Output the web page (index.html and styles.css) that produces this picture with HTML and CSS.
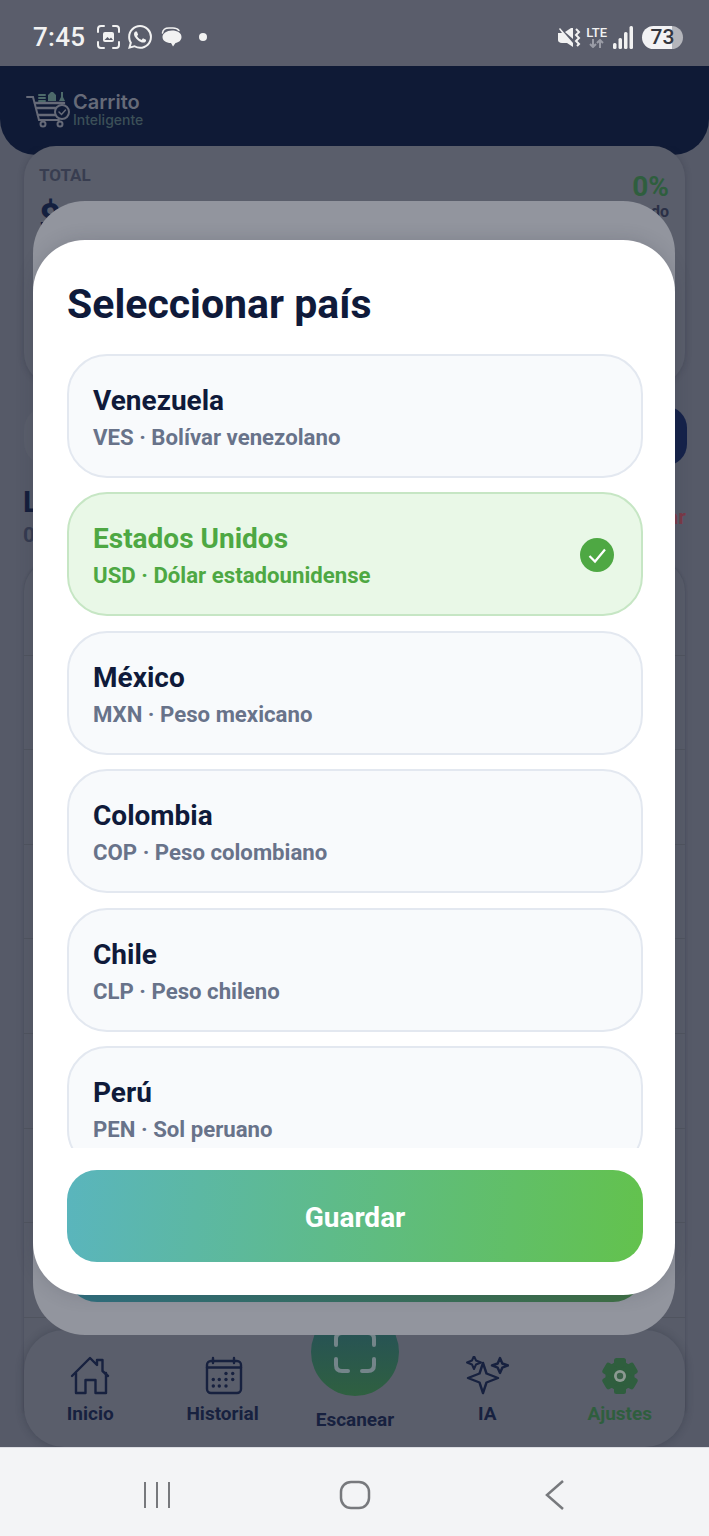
FILE: index.html
```html
<!DOCTYPE html>
<html lang="es">
<head>
    <meta charset="UTF-8">
    <meta name="viewport" content="width=device-width, initial-scale=1.0">
    <title>Carrito Inteligente</title>
    <link rel="stylesheet" href="styles.css">
</head>
<body>
    <div class="phone">
        <!-- status bar -->
        <div class="status-bar">
            <span class="clock">7:45</span>
            <svg class="st-shot" width="23" height="24" viewBox="0 0 23 24" fill="none" stroke="#f2f2f2" stroke-width="2" stroke-linecap="round">
                <path d="M1 7V4q0-3 3-3h3M16 1h3q3 0 3 3v3M22 17v3q0 3-3 3h-3M7 23H4q-3 0-3-3v-3"/>
                <rect x="6" y="7" width="11" height="10" rx="2" fill="#f2f2f2" stroke="none"/>
                <path d="M7.5 15l3-3 2 2 1.500-1.500 2 2.500z" fill="#5a5d6b" stroke="none"/>
            </svg>
            <svg class="st-wa" width="24" height="24" viewBox="0 0 24 24" fill="#f2f2f2">
                <path d="M17.472 14.382c-.297-.149-1.758-.867-2.03-.967-.273-.099-.471-.148-.67.15-.197.297-.767.966-.94 1.164-.173.199-.347.223-.644.075-.297-.15-1.255-.463-2.39-1.475-.883-.788-1.48-1.761-1.653-2.059-.173-.297-.018-.458.13-.606.134-.133.298-.347.446-.52.149-.174.198-.298.298-.497.099-.198.05-.371-.025-.52-.075-.149-.669-1.612-.916-2.207-.242-.579-.487-.5-.669-.51-.173-.008-.371-.01-.57-.01-.198 0-.52.074-.792.372-.272.297-1.04 1.016-1.04 2.479 0 1.462 1.065 2.875 1.213 3.074.149.198 2.096 3.2 5.077 4.487.709.306 1.262.489 1.694.625.712.227 1.36.195 1.871.118.571-.085 1.758-.719 2.006-1.413.248-.694.248-1.289.173-1.413-.074-.124-.272-.198-.57-.347m-5.421 7.403h-.004a9.87 9.87 0 01-5.031-1.378l-.361-.214-3.741.982.998-3.648-.235-.374a9.86 9.86 0 01-1.51-5.26c.001-5.45 4.436-9.884 9.888-9.884 2.64 0 5.122 1.03 6.988 2.898a9.825 9.825 0 012.893 6.994c-.003 5.45-4.437 9.884-9.885 9.884m8.413-18.297A11.815 11.815 0 0012.05 0C5.495 0 .16 5.335.157 11.892c0 2.096.547 4.142 1.588 5.945L.057 24l6.305-1.654a11.882 11.882 0 005.683 1.448h.005c6.554 0 11.89-5.335 11.893-11.893a11.821 11.821 0 00-3.48-8.413z"/>
            </svg>
            <svg class="st-chat" width="21" height="20" viewBox="0 0 21 20" fill="#f2f2f2">
                <path d="M1.500 6Q2 1 8 1h4q4 0 6 2.500" fill="none" stroke="#f2f2f2" stroke-width="1.500" stroke-linecap="round"/>
                <path d="M11 3.500c5.500 0 9.500 2.500 9.500 6.500 0 3.500-3 5.500-6 6l-2.500 3.500-2-3.500c-5 0-8.500-2.500-8.500-6s4-6.500 9.500-6.500z"/>
            </svg>
            <span class="st-dot"></span>
            <div class="status-right">
                <svg width="24" height="21" viewBox="0 0 24 21" fill="#f2f2f2">
                    <path d="M1 6h4L2 2l1-1 13 15v4l-6-4H5q-4-.5-4-3z"/>
                    <path d="M8 5l6-4h2v11z"/>
                    <path d="M19 2l3 3-3 3 3 3-3 3 3 3-2 2" fill="none" stroke="#f2f2f2" stroke-width="2"/>
                </svg>
                <div class="lte">
                    <span>LTE</span>
                    <svg width="15" height="9" viewBox="0 0 15 9" fill="none" stroke="#9a9ca6" stroke-width="2">
                        <path d="M4 0v8M1 5l3 3 3-3M11 9V1M8 4l3-3 3 3"/>
                    </svg>
                </div>
                <svg class="signal" width="21" height="23" viewBox="0 0 21 23" fill="#f2f2f2">
                    <rect x="0" y="17" width="3.500" height="6" rx="1.500"/>
                    <rect x="5.500" y="12" width="3.500" height="11" rx="1.500"/>
                    <rect x="11" y="6" width="3.500" height="17" rx="1.500"/>
                    <rect x="16.500" y="0" width="3.500" height="23" rx="1.500"/>
                </svg>
                <div class="battery"><span>73</span></div>
            </div>
        </div>

        <!-- app behind the dialog -->
        <div class="app">
            <header class="app-header">
                <svg width="44" height="40" viewBox="0 0 44 40" fill="none" stroke="#666a78" stroke-width="2" stroke-linecap="round">
                    <path d="M1 9h6l6 23h20"/>
                    <path d="M9 15h29M11 20h19M12 27h18" stroke-width="2.500"/>
                    <circle cx="17" cy="36" r="2.500"/>
                    <circle cx="34" cy="36" r="2.500"/>
                    <circle cx="36" cy="24" r="7" fill="#0f1a36"/>
                    <path d="M33 24l2.500 2.500 4-4.500" stroke-width="1.500"/>
                    <path d="M13 7h6M13 10h6M13 13h6" stroke="#4d6a6a"/>
                    <path d="M22 13V7l3-3h2l3 3v6zM33 13l2-4V4l2 0v5l2 4z" fill="#4d6a6a" stroke="none"/>
                </svg>
                <div class="brand">
                    <span class="brand-main">Carrito</span>
                    <span class="brand-sub">Inteligente</span>
                </div>
            </header>

            <div class="content">
                <section class="total-card">
                    <div>
                        <div class="total-label">TOTAL</div>
                        <div class="total-value">$ 0.00</div>
                    </div>
                    <div class="total-side">
                        <div class="percent">0%</div>
                        <div class="percent-label">Ahorrado</div>
                    </div>
                </section>
                <div class="search-row">
                    <span class="search-btn"></span>
                </div>
                <div class="list-head">
                    <div>
                        <div class="list-title">Lista</div>
                        <div class="list-count">0 items</div>
                    </div>
                    <span class="list-clear">Vaciar</span>
                </div>
                <div class="list-card">
                    <div class="list-row"></div>
                    <div class="list-row"></div>
                    <div class="list-row"></div>
                    <div class="list-row"></div>
                    <div class="list-row"></div>
                    <div class="list-row"></div>
                    <div class="list-row"></div>
                    <div class="list-row"></div>
                    <div class="list-row"></div>
                </div>
            </div>

            <nav class="tabs">
                <div class="tab">
                    <svg width="40" height="40" viewBox="0 0 40 40" fill="none" stroke="#17213f" stroke-width="2.400" stroke-linejoin="round" stroke-linecap="round">
                        <path d="M2 20L20 2l7 7V4h5.500v11L38 20"/>
                        <path d="M6 17v20h9.500V24h10v13H36V17"/>
                    </svg>
                    <span>Inicio</span>
                </div>
                <div class="tab">
                    <svg width="40" height="40" viewBox="0 0 40 40" fill="none" stroke="#17213f" stroke-width="2.400" stroke-linecap="round">
                        <rect x="4" y="5" width="34" height="32" rx="4"/>
                        <path d="M4 11.500h34M10 2v5M31 2v5"/>
                        <g fill="#17213f" stroke="none">
                            <circle cx="23" cy="17.500" r="1.700"/><circle cx="29.700" cy="17.500" r="1.700"/>
                            <circle cx="10.300" cy="23.500" r="1.700"/><circle cx="16.300" cy="23.500" r="1.700"/>
                            <circle cx="23" cy="23.500" r="1.700"/><circle cx="29.700" cy="23.500" r="1.700"/>
                            <circle cx="10.300" cy="30" r="1.700"/><circle cx="16.300" cy="30" r="1.700"/>
                            <circle cx="23" cy="30" r="1.700"/>
                        </g>
                    </svg>
                    <span>Historial</span>
                </div>
                <div class="tab tab-scan">
                    <div class="scan-circle">
                        <svg width="42" height="42" viewBox="0 0 42 42" fill="none" stroke="#74858a" stroke-width="4" stroke-linecap="round">
                            <path d="M2 14V8q0-6 6-6h6M28 2h6q6 0 6 6v6M40 28v6q0 6-6 6h-6M14 40H8q-6 0-6-6v-6"/>
                        </svg>
                    </div>
                    <span>Escanear</span>
                </div>
                <div class="tab">
                    <svg width="44" height="40" viewBox="0 0 44 40" fill="none" stroke="#17213f" stroke-width="2.400" stroke-linejoin="round">
                        <path d="M18 7l3.500 10.500L33 22l-11.500 4.500L18 37l-3.500-10.500L3 22l11.500-4.500z"/>
                        <path d="M9 0l2 4.500 5 2-5 2L9 13l-2-4.500-5-2 5-2z" stroke-width="2"/>
                        <path d="M35 2l2.300 5.500L43 9.500l-5.700 2.200L35 17l-2.300-5.300L27 9.500l5.700-2z"/>
                    </svg>
                    <span>IA</span>
                </div>
                <div class="tab tab-active">
                    <svg width="40" height="40" viewBox="0 0 40 40" fill="#2f5e3e">
                        <circle cx="20" cy="20" r="14.500"/>
                        <rect x="14" y="2" width="12" height="36" rx="2.500"/>
                        <rect x="14" y="2" width="12" height="36" rx="2.500" transform="rotate(60 20 20)"/>
                        <rect x="14" y="2" width="12" height="36" rx="2.500" transform="rotate(120 20 20)"/>
                        <circle cx="20" cy="20" r="6" fill="#8c9a92"/>
                        <circle cx="20" cy="20" r="3.200" fill="#3b6149"/>
                    </svg>
                    <span>Ajustes</span>
                </div>
            </nav>
        </div>

        <!-- android navigation bar -->
        <div class="nav-bar">
            <svg width="28" height="26" viewBox="0 0 28 26" fill="none" stroke="#77797d" stroke-width="2"><path d="M2 0v26M14 0v26M26 0v26"/></svg>
            <svg width="32" height="30" viewBox="0 0 32 30" fill="none" stroke="#77797d" stroke-width="2.500"><rect x="2" y="2" width="28" height="26" rx="10"/></svg>
            <svg width="20" height="30" viewBox="0 0 20 30" fill="none" stroke="#77797d" stroke-width="2.500"><path d="M18 1L2 15l16 14"/></svg>
        </div>

        <!-- dialog stack -->
        <div class="sheet sheet-back">
            <div class="sheet-fill"></div>
            <div class="save-btn save-btn-dim"></div>
        </div>
        <div class="sheet sheet-front">
            <h2 class="sheet-title">Seleccionar país</h2>
            <div class="country-list">
                <div class="country">
                    <div>
                        <div class="country-name">Venezuela</div>
                        <div class="country-sub">VES · Bolívar venezolano</div>
                    </div>
                </div>
                <div class="country selected">
                    <div>
                        <div class="country-name">Estados Unidos</div>
                        <div class="country-sub">USD · Dólar estadounidense</div>
                    </div>
                    <svg width="34" height="34" viewBox="0 0 34 34">
                        <circle cx="17" cy="17" r="17" fill="#4ea843"/>
                        <path d="M9.500 18l5.500 5.500L25 11.500" fill="none" stroke="#fff" stroke-width="2.200"/>
                    </svg>
                </div>
                <div class="country">
                    <div>
                        <div class="country-name">México</div>
                        <div class="country-sub">MXN · Peso mexicano</div>
                    </div>
                </div>
                <div class="country">
                    <div>
                        <div class="country-name">Colombia</div>
                        <div class="country-sub">COP · Peso colombiano</div>
                    </div>
                </div>
                <div class="country">
                    <div>
                        <div class="country-name">Chile</div>
                        <div class="country-sub">CLP · Peso chileno</div>
                    </div>
                </div>
                <div class="country">
                    <div>
                        <div class="country-name">Perú</div>
                        <div class="country-sub">PEN · Sol peruano</div>
                    </div>
                </div>
            </div>
            <button class="save-btn">Guardar</button>
        </div>
    </div>
</body>
</html>
```

FILE: styles.css
```css
* {
    margin: 0;
    padding: 0;
    box-sizing: border-box;
    font-family: 'Roboto', 'Liberation Sans', sans-serif;
}

body {
    background: #565a68;
}

.phone {
    position: relative;
    width: 709px;
    height: 1536px;
    display: flex;
    flex-direction: column;
    overflow: hidden;
    background: #565a68;
}

/* status bar */
.status-bar {
    height: 66px;
    flex-shrink: 0;
    background: #5a5d6b;
    display: flex;
    align-items: center;
    padding: 8px 26px 0 33px;
    color: #f2f2f2;
}

.clock {
    font-size: 26px;
    font-weight: 500;
    letter-spacing: 0.3px;
    margin-right: 12px;
}

.st-wa {
    margin-left: 8px;
}

.st-chat {
    margin-left: 9px;
}

.st-dot {
    width: 8px;
    height: 8px;
    border-radius: 50%;
    background: #f2f2f2;
    margin-left: 17px;
}

.status-right {
    margin-left: auto;
    display: flex;
    align-items: center;
}

.lte {
    display: flex;
    flex-direction: column;
    align-items: center;
    margin-left: 5px;
    font-size: 13px;
    font-weight: 500;
    line-height: 13px;
}

.signal {
    margin-left: 6px;
}

.battery {
    width: 41px;
    height: 23px;
    margin-left: 8px;
    border-radius: 12px;
    background: linear-gradient(90deg, #f2f2f4 73%, #b4b5bb 73%);
    color: #33363f;
    font-size: 21px;
    font-weight: 500;
    line-height: 23px;
    text-align: center;
}

/* app behind the dialog */
.app {
    flex: 1;
    min-height: 0;
    display: flex;
    flex-direction: column;
    overflow: hidden;
    position: relative;
}

.app-header {
    height: 89px;
    flex-shrink: 0;
    background: #0f1a36;
    border-radius: 0 0 36px 36px;
    display: flex;
    align-items: flex-start;
    gap: 3px;
    padding: 22px 26px 0;
}

.brand {
    display: flex;
    flex-direction: column;
    margin-top: 3px;
}

.brand-main {
    font-family: 'Inter', sans-serif;
    font-size: 20px;
    font-weight: 600;
    line-height: 22px;
    color: #666a78;
}

.brand-sub {
    font-family: 'Inter', sans-serif;
    font-size: 14px;
    font-weight: 500;
    line-height: 14px;
    color: #3c5058;
}

.content {
    flex: 1;
    min-height: 0;
    margin-top: -9px;
    padding: 0 24px;
    overflow: hidden;
}

.total-card {
    height: 239px;
    background: #5a5e6b;
    border-radius: 32px;
    box-shadow: 0 0 6px rgba(30, 35, 50, 0.25);
    display: flex;
    justify-content: space-between;
    padding: 19px 16px 19px 15px;
}

.total-label {
    font-size: 17px;
    font-weight: 700;
    line-height: 20px;
    color: #383d50;
}

.total-value {
    margin-top: 11px;
    font-size: 38px;
    font-weight: 700;
    color: #14203f;
}

.total-side {
    text-align: right;
    padding-top: 6px;
}

.percent {
    font-size: 28px;
    font-weight: 700;
    line-height: 32px;
    color: #2f5e3e;
}

.percent-label {
    font-size: 16px;
    font-weight: 700;
    line-height: 18px;
    color: #2a3046;
}

.search-row {
    height: 60px;
    margin-top: 21px;
    background: #5a5e6b;
    border-radius: 24px;
    display: flex;
    justify-content: flex-end;
}

.search-btn {
    width: 90px;
    margin-right: -2px;
    background: #15224a;
    border-radius: 22px;
}

.list-head {
    display: flex;
    justify-content: space-between;
    align-items: center;
    height: 95px;
    padding-top: 6px;
    margin-left: -1px;
    margin-right: -1px;
}

.list-title {
    font-size: 30px;
    font-weight: 700;
    line-height: 36px;
    color: #141e3c;
}

.list-count {
    font-size: 21px;
    font-weight: 700;
    line-height: 30px;
    color: #353b50;
}

.list-clear {
    font-size: 21px;
    font-weight: 700;
    color: #7a3a48;
}

.list-card {
    background: #585c69;
    border-radius: 30px 30px 0 0;
    box-shadow: 0 0 3px rgba(30, 35, 50, 0.3);
}

.list-row {
    height: 94.6px;
    border-bottom: 1px solid #50545f;
}

.tabs {
    position: absolute;
    left: 24px;
    right: 24px;
    bottom: 0;
    height: 117px;
    background: #5a5e6b;
    border-radius: 40px;
    box-shadow: 0 0 8px rgba(30, 35, 50, 0.3);
    display: grid;
    grid-template-columns: repeat(5, 132.4px);
}

.tab {
    display: flex;
    flex-direction: column;
    align-items: center;
    padding-top: 26px;
    font-size: 19px;
    font-weight: 700;
    color: #17213f;
}

.tab span {
    margin-top: 7px;
    line-height: 22px;
}

.tab-active {
    color: #2f5e3e;
}

.tab-scan {
    padding-top: 0;
}

.scan-circle {
    width: 88px;
    height: 88px;
    margin-top: -22px;
    border-radius: 50%;
    background: linear-gradient(180deg, #244e5c, #2f6040);
    display: flex;
    align-items: center;
    justify-content: center;
}

.tab-scan span {
    margin-top: 13px;
}

/* android navigation bar */
.nav-bar {
    height: 89px;
    flex-shrink: 0;
    background: #f3f4f6;
    border-top: 1px solid #dcdde3;
    display: grid;
    grid-template-columns: 312px 85px 312px;
    justify-items: center;
    align-items: center;
    padding-top: 6px;
}

.nav-bar svg:first-child {
    justify-self: end;
    margin-right: 141px;
}

.nav-bar svg:last-child {
    justify-self: start;
    margin-left: 148px;
}

/* dialog stack */
.sheet {
    position: absolute;
    left: 33px;
    width: 642px;
    border-radius: 52px;
    display: flex;
    flex-direction: column;
    padding: 0 32px 33px 34px;
}

.sheet-back {
    top: 201px;
    height: 1134px;
    background: #92959e;
}

.sheet-fill {
    flex: 1;
}

.sheet-front {
    top: 240px;
    height: 1055px;
    background: #fff;
    box-shadow: 0 0 18px rgba(40, 44, 60, 0.18);
}

.sheet-title {
    margin-top: 38px;
    font-size: 41px;
    font-weight: 700;
    line-height: 52px;
    color: #0f1a3a;
}

.country-list {
    flex: 1;
    min-height: 0;
    margin-top: 24px;
    display: flex;
    flex-direction: column;
    gap: 14.4px;
    overflow: hidden;
}

.country {
    height: 124px;
    flex-shrink: 0;
    background: #f8fafc;
    border: 2px solid #e3e8f0;
    border-radius: 40px;
    display: flex;
    align-items: center;
    justify-content: space-between;
    padding: 1px 27px 0 24px;
}

.country-name {
    font-size: 28px;
    font-weight: 700;
    line-height: 36px;
    color: #0f1a3a;
}

.country-sub {
    margin-top: 5px;
    font-size: 22.200px;
    font-weight: 700;
    line-height: 26px;
    color: #68738a;
}

.selected {
    background: #e9f8e7;
    border-color: #c6e6c4;
}

.selected .country-name,
.selected .country-sub {
    color: #4ea843;
}

.save-btn {
    flex-shrink: 0;
    height: 92px;
    margin-top: 22px;
    padding-top: 3px;
    border: none;
    border-radius: 30px;
    background: linear-gradient(95deg, #5ab5bd, #63c24d);
    color: #fff;
    font-size: 28px;
    font-weight: 700;
}

.save-btn-dim {
    background: linear-gradient(95deg, #2f6f80, #3f7044);
}
```
